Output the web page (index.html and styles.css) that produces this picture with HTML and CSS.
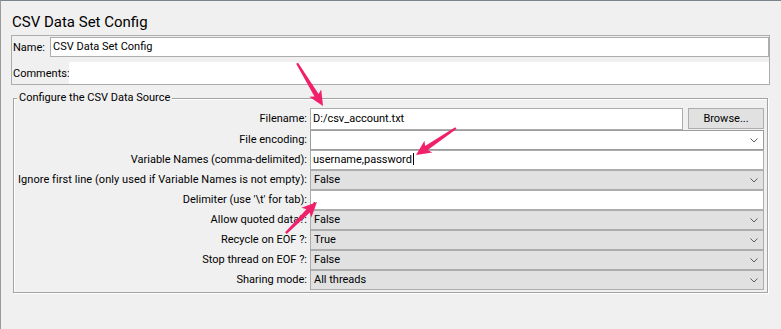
FILE: index.html
```html
<!DOCTYPE html>
<html>
<head>
<meta charset="utf-8">
<title>CSV Data Set Config</title>
<link rel="stylesheet" href="styles.css">
</head>
<body>
<div class="window">
  <h1 class="title">CSV Data Set Config</h1>

  <div class="name-panel">
    <div class="name-row">
      <span class="name-label">Name:</span>
      <div class="field name-field">CSV Data Set Config</div>
    </div>
    <div class="comments-row">
      <span class="comments-label">Comments:</span>
      <div class="comments-area"></div>
    </div>
  </div>

  <div class="group">
    <span class="legend">Configure the CSV Data Source</span>
    <div class="form">
      <span class="lbl lbl-first">Filename:</span>
      <div class="file-row">
        <div class="field file-field">D:/csv_account.txt</div>
        <div class="button">Browse...</div>
      </div>

      <span class="lbl">File encoding:</span>
      <div class="combo combo-white"><span></span><svg class="chev" width="8" height="5" viewBox="0 0 8 5"><polyline points="0.5,0.5 4,4 7.5,0.5"/></svg></div>

      <span class="lbl">Variable Names (comma-delimited):</span>
      <div class="field">username,password<span class="caret"></span></div>

      <span class="lbl lbl-wide">Ignore first line (only used if Variable Names is not empty):</span>
      <div class="combo"><span>False</span><svg class="chev" width="8" height="5" viewBox="0 0 8 5"><polyline points="0.5,0.5 4,4 7.5,0.5"/></svg></div>

      <span class="lbl">Delimiter (use '\t' for tab):</span>
      <div class="field">,</div>

      <span class="lbl">Allow quoted data?:</span>
      <div class="combo"><span>False</span><svg class="chev" width="8" height="5" viewBox="0 0 8 5"><polyline points="0.5,0.5 4,4 7.5,0.5"/></svg></div>

      <span class="lbl">Recycle on EOF ?:</span>
      <div class="combo"><span>True</span><svg class="chev" width="8" height="5" viewBox="0 0 8 5"><polyline points="0.5,0.5 4,4 7.5,0.5"/></svg></div>

      <span class="lbl">Stop thread on EOF ?:</span>
      <div class="combo"><span>False</span><svg class="chev" width="8" height="5" viewBox="0 0 8 5"><polyline points="0.5,0.5 4,4 7.5,0.5"/></svg></div>

      <span class="lbl">Sharing mode:</span>
      <div class="combo"><span>All threads</span><svg class="chev" width="8" height="5" viewBox="0 0 8 5"><polyline points="0.5,0.5 4,4 7.5,0.5"/></svg></div>
    </div>
  </div>
</div>

<svg class="annotations" width="781" height="329" viewBox="0 0 781 329">
  <g fill="#f0206b">
    <polygon transform="translate(323,106) rotate(58.8)" points="0,0 -15,-7 -12.5,-2.4 -50,-1.1 -50,1.1 -12.5,2.4 -15,7"/>
    <polygon transform="translate(416,155) rotate(146)" points="0,0 -15,-7 -12.5,-2.4 -48,-1.1 -48,1.1 -12.5,2.4 -15,7"/>
    <polygon transform="translate(317,202) rotate(-45)" points="0,0 -15,-7 -12.5,-2.4 -44,-1.1 -44,1.1 -12.5,2.4 -15,7"/>
  </g>
</svg>
</body>
</html>
```
FILE: styles.css
```css
html, body {
  margin: 0;
  padding: 0;
  background: #f0f0f0;
}

body {
  position: relative;
  width: 781px;
  height: 329px;
  overflow: hidden;
  font-family: Roboto, "Liberation Sans", sans-serif;
  font-size: 11px;
  color: #000;
}

.window {
  box-sizing: border-box;
  width: 781px;
  height: 329px;
  border-top: 1px solid #7c848c;
  border-left: 1px solid #9b9b9b;
  background: #f0f0f0;
}

.title {
  margin: 0;
  padding: 12px 0 0 11px;
  font-family: Roboto, "Liberation Sans", sans-serif;
  font-weight: 400;
  font-size: 15px;
  line-height: 18px;
  color: #000;
}

/* Name / Comments panel */
.name-panel {
  box-sizing: border-box;
  width: 759px;
  height: 50px;
  margin: 4px 0 0 10px;
  border: 1px solid #adadad;
  padding: 0 0 0 1px;
}

.name-row {
  display: flex;
  align-items: center;
  height: 20px;
  padding-top: 1px;
}

.name-label {
  width: 37px;
  flex: none;
}

.name-field {
  flex: 1;
  border-right: 2px solid #a0a0a0;
}

.comments-row {
  display: flex;
  align-items: center;
  height: 22px;
  margin-top: 5px;
}

.comments-label {
  width: 56px;
  flex: none;
}

.comments-area {
  flex: 1;
  height: 22px;
  background: #fff;
}

/* Etched group */
.group {
  position: relative;
  box-sizing: border-box;
  width: 755px;
  height: 195px;
  margin: 13px 0 0 12px;
  padding: 9px 3px 2px 0;
  border: 1px solid #a3a3a3;
  box-shadow: 1px 1px 0 #fff, inset 1px 1px 0 #fff;
}

.legend {
  position: absolute;
  top: -9px;
  left: 3px;
  padding: 0 2px;
  line-height: 16px;
  background: #f0f0f0;
  white-space: nowrap;
}

.form {
  display: grid;
  grid-template-columns: 293px 1fr;
  grid-template-rows: 22px repeat(8, 20px);
  column-gap: 3px;
}

.lbl {
  text-align: right;
  line-height: 20px;
  white-space: nowrap;
}

.lbl-first {
  line-height: 22px;
}

.lbl-wide {
  letter-spacing: 0.06px;
}

.file-row {
  display: flex;
  gap: 5px;
  align-items: flex-start;
}

.field {
  box-sizing: border-box;
  height: 20px;
  padding: 0 2px;
  line-height: 18px;
  background: #fff;
  border: 1px solid #adadad;
  white-space: nowrap;
}

.file-field {
  flex: 1;
  height: 22px;
  line-height: 20px;
}

.button {
  box-sizing: border-box;
  width: 76px;
  height: 21px;
  line-height: 19px;
  text-align: center;
  background: #e1e1e1;
  border: 1px solid #adadad;
}

.caret {
  display: inline-block;
  width: 1px;
  height: 12px;
  margin-left: 1px;
  vertical-align: -2px;
  background: #000;
}

.combo {
  box-sizing: border-box;
  height: 20px;
  display: flex;
  align-items: center;
  justify-content: space-between;
  padding: 0 5px 0 3px;
  background: #e1e1e1;
  border: 1px solid #acacac;
  line-height: 18px;
}

.combo-white {
  background: #fff;
  border-color: #9c9c9c;
}

.chev {
  flex: none;
}

.chev polyline {
  fill: none;
  stroke: #5c5c5c;
  stroke-width: 1;
}

.annotations {
  position: absolute;
  top: 0;
  left: 0;
  pointer-events: none;
}
```
